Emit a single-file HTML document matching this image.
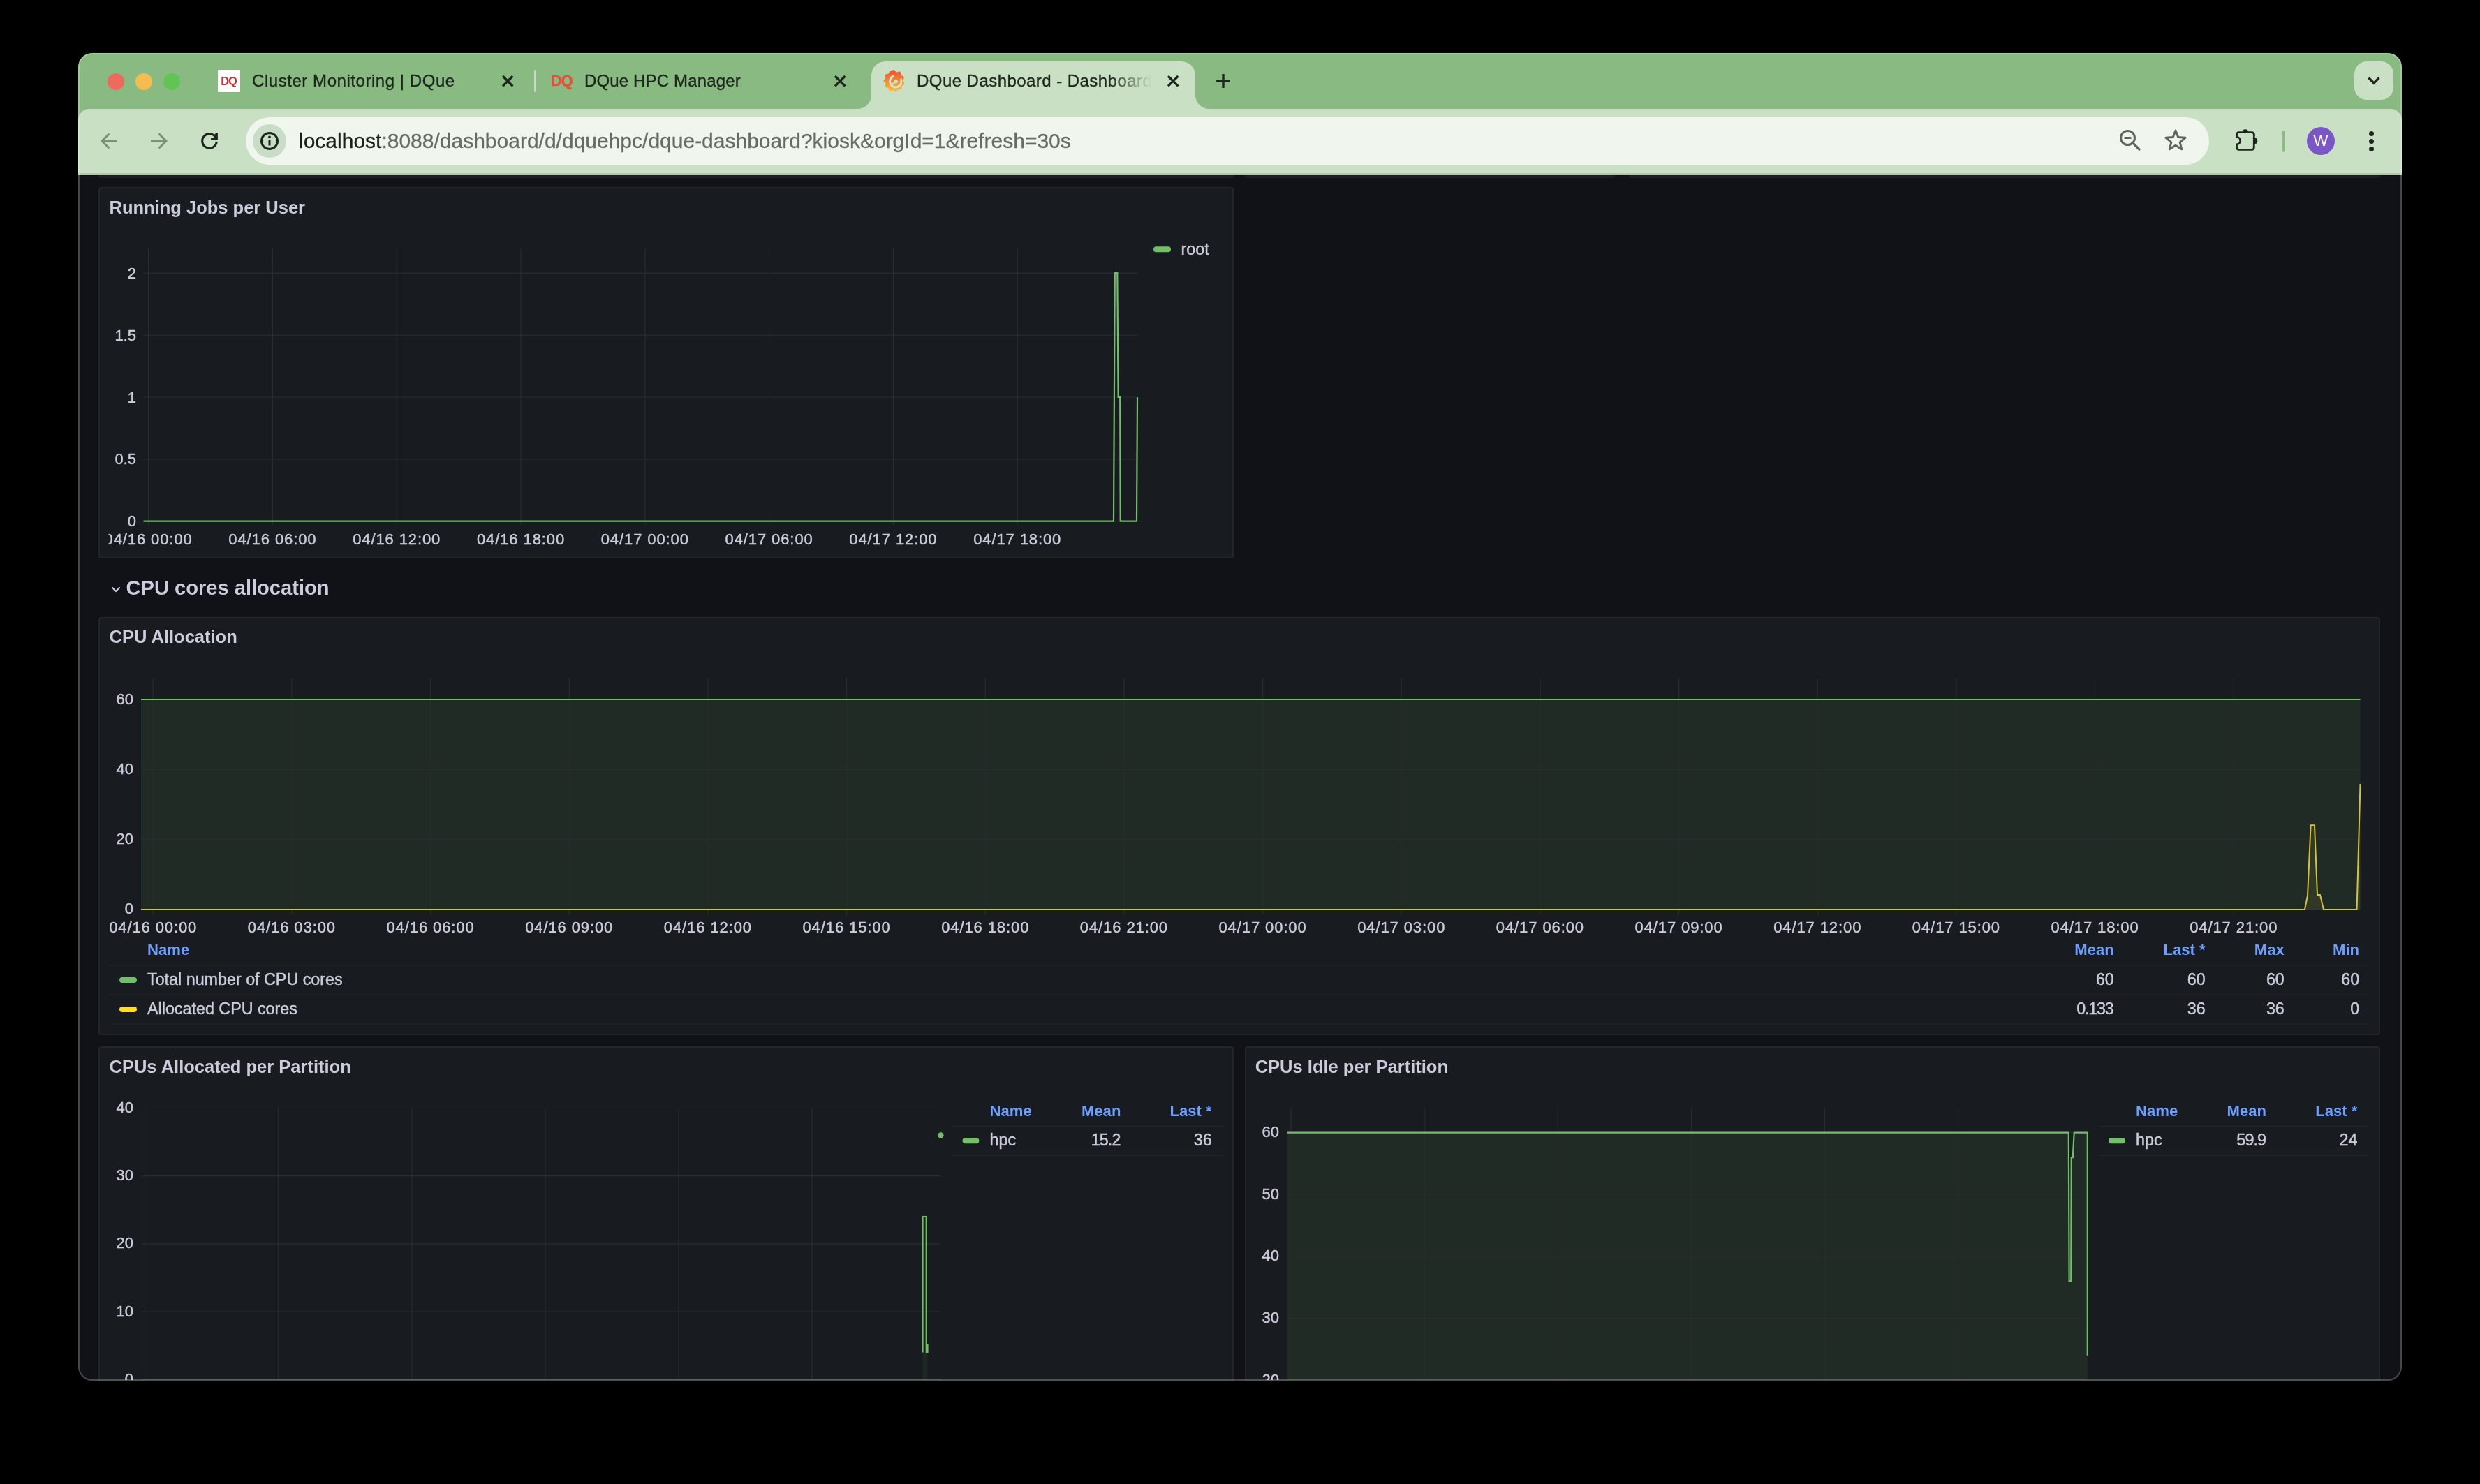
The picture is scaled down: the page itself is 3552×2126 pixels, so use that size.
<!DOCTYPE html>
<html><head><meta charset="utf-8"><title>DQue Dashboard</title>
<style>
html,body{margin:0;padding:0;background:#000;}
body{width:3552px;height:2126px;overflow:hidden;position:relative;font-family:"Liberation Sans", sans-serif;}
#win{position:absolute;left:0;top:0;width:3552px;height:2126px;clip-path:inset(76px 112px 148px 112px round 20px);}
#win > div{will-change:transform;}
svg text{font-family:"Liberation Sans", sans-serif;}
</style></head><body>
<div id="win">
<div style="position:absolute;left:112px;top:76px;width:3328px;height:110px;background:#88ba82"></div>
<div style="position:absolute;left:154px;top:105px;width:24px;height:24px;border-radius:50%;background:#ee6a5f"></div>
<div style="position:absolute;left:194px;top:105px;width:24px;height:24px;border-radius:50%;background:#f5bd4f"></div>
<div style="position:absolute;left:234px;top:105px;width:24px;height:24px;border-radius:50%;background:#61c454"></div>
<div style="position:absolute;left:112px;top:156px;width:3328px;height:94px;background:#c9e0c5;border-radius:16px 16px 0 0"></div>
<div style="position:absolute;left:112px;top:248px;width:3328px;height:2px;background:#b4c6b0"></div>
<div style="position:absolute;left:1248px;top:88px;width:464px;height:80px;background:#c9e0c5;border-radius:20px 20px 0 0"></div>
<div style="position:absolute;left:1228px;top:136px;width:20px;height:20px;background:radial-gradient(circle at 0 0, #88ba82 19.5px, #c9e0c5 20.5px)"></div>
<div style="position:absolute;left:1712px;top:136px;width:20px;height:20px;background:radial-gradient(circle at 100% 0, #88ba82 19.5px, #c9e0c5 20.5px)"></div>
<div style="position:absolute;left:312px;top:100px;width:32px;height:32px;background:#fff;color:#cc3030;font-weight:bold;font-size:16.5px;line-height:32px;text-align:center;letter-spacing:-1px;text-indent:-1px">DQ</div>
<div style="position:absolute;left:361px;top:100px;height:32px;line-height:32px;font-size:24px;color:#1d261c;white-space:nowrap;letter-spacing:0.55px;-webkit-text-stroke:0.35px #1d261c;">Cluster Monitoring | DQue</div>
<svg style="position:absolute;left:718.3px;top:106.8px" width="18.4" height="18.4"><path d="M2 2L16.4 16.4M16.4 2L2 16.4" stroke="#1d261c" stroke-width="3.3" stroke-linecap="butt"/></svg>
<div style="position:absolute;left:765px;top:100px;width:3px;height:32px;border-radius:2px;background:#c4ddc0"></div>
<div style="position:absolute;left:783px;top:100px;width:42px;height:32px;color:#e2523a;font-weight:bold;font-size:22px;line-height:32px;text-align:center;letter-spacing:-1.5px;-webkit-text-stroke:0.6px #e2523a">DQ</div>
<div style="position:absolute;left:837px;top:100px;height:32px;line-height:32px;font-size:24px;color:#1d261c;white-space:nowrap;letter-spacing:0.15px;-webkit-text-stroke:0.35px #1d261c;">DQue HPC Manager</div>
<svg style="position:absolute;left:1194.3px;top:106.8px" width="18.4" height="18.4"><path d="M2 2L16.4 16.4M16.4 2L2 16.4" stroke="#1d261c" stroke-width="3.3" stroke-linecap="butt"/></svg>
<svg style="position:absolute;left:1262px;top:98px" width="36" height="36" viewBox="0 0 36 36">
<defs><linearGradient id="gg" x1="0" y1="1" x2="0" y2="0"><stop offset="0" stop-color="#f9c33c"/><stop offset="1" stop-color="#ee4f2c"/></linearGradient></defs>
<path fill="url(#gg)" d="M18.5 2 L22 5.5 L27.5 4.5 L28.5 9 L33 12.5 L31.5 17 L33.5 22.5 L29.5 25 L29 30 L24 30.5 L21 34 L17 31.5 L12 33 L10.5 28.5 L5.5 26.5 L6.5 21.5 L3 17.5 L6.5 14 L5.5 9 L10.5 7.5 L13 3.5 Z"/>
<circle cx="20.8" cy="18.6" r="8.3" fill="none" stroke="#d3e7d0" stroke-width="2.9" stroke-dasharray="40.5 11.6" transform="rotate(-25 20.8 18.6)"/>
<circle cx="21" cy="18.6" r="2.9" fill="#c9e0c5"/>
<path d="M21 18.6 L15.5 23.5" stroke="#c9e0c5" stroke-width="2.6"/>
</svg>
<div style="position:absolute;left:1313px;top:100px;height:32px;line-height:32px;font-size:24px;color:#1d261c;white-space:nowrap;letter-spacing:0.45px;-webkit-text-stroke:0.35px #1d261c;width:336px;overflow:hidden;-webkit-mask-image:linear-gradient(to right,#000 82%,transparent 100%);">DQue Dashboard - Dashboard</div>
<svg style="position:absolute;left:1670.8px;top:106.8px" width="18.4" height="18.4"><path d="M2 2L16.4 16.4M16.4 2L2 16.4" stroke="#1d261c" stroke-width="3.3" stroke-linecap="butt"/></svg>
<svg style="position:absolute;left:1740px;top:103.8px" width="24" height="24"><path d="M12 2.1V21.9M2.1 12H21.9" stroke="#1d261c" stroke-width="3.4"/></svg>
<div style="position:absolute;left:3372px;top:88px;width:56px;height:55px;border-radius:18px;background:#c9e0c5"></div>
<svg style="position:absolute;left:3389.5px;top:109px" width="20" height="14"><path d="M2.5 2.5L10 10L17.5 2.5" fill="none" stroke="#1d261c" stroke-width="3.4" stroke-linejoin="miter"/></svg>
<svg style="position:absolute;left:140px;top:186px" width="32" height="32"><path d="M28 16H6M16.5 5.5L6 16L16.5 26.5" fill="none" stroke="#789474" stroke-width="3"/></svg>
<svg style="position:absolute;left:212px;top:186px" width="32" height="32"><path d="M4 16H26M15.5 5.5L26 16L15.5 26.5" fill="none" stroke="#789474" stroke-width="3"/></svg>
<svg style="position:absolute;left:284px;top:186px" width="32" height="32"><path d="M26.26 16.9A10.3 10.3 0 1 1 24.8 10.6" fill="none" stroke="#1d261c" stroke-width="3.1"/><path d="M18.1 11.2V13.9H27.9V4.1H25.2V11.2Z" fill="#1d261c"/><path d="M21.5 8.2L25.2 4.8V11.2H23Z" fill="#1d261c"/></svg>
<div style="position:absolute;left:352px;top:168px;width:2812px;height:68px;border-radius:34px;background:#f0f6ee"></div>
<div style="position:absolute;left:362px;top:178px;width:48px;height:48px;border-radius:50%;background:#c9dcc5"></div>
<svg style="position:absolute;left:370px;top:186px" width="32" height="32"><circle cx="16" cy="16" r="11.5" fill="none" stroke="#1d261c" stroke-width="3"/><rect x="14.5" y="14" width="3" height="8.5" fill="#1d261c"/><circle cx="16" cy="10.3" r="1.9" fill="#1d261c"/></svg>
<div style="position:absolute;left:428px;top:180px;height:44px;line-height:44px;font-size:30px;color:#1a1f1a;white-space:nowrap;-webkit-text-stroke:0.3px #1a1f1a">localhost<span style="color:#646c63;-webkit-text-stroke:0.3px #646c63">:8088/dashboard/d/dquehpc/dque-dashboard?kiosk&amp;orgId=1&amp;refresh=30s</span></div>
<svg style="position:absolute;left:3033px;top:183px" width="36" height="36"><circle cx="14.5" cy="14.5" r="10" fill="none" stroke="#5d665b" stroke-width="3"/><path d="M9.5 14.5H19.5" stroke="#5d665b" stroke-width="3"/><path d="M22 22L31 31" stroke="#5d665b" stroke-width="3.2" stroke-linecap="round"/></svg>
<svg style="position:absolute;left:3098px;top:183px" width="36" height="36"><path d="M18 4L21.8 13.6L32 14.3L24.2 20.8L26.7 30.8L18 25.3L9.3 30.8L11.8 20.8L4 14.3L14.2 13.6Z" fill="none" stroke="#5d665b" stroke-width="3" stroke-linejoin="round"/></svg>
<svg style="position:absolute;left:3195px;top:180px" width="44" height="42"><path d="M11.5 9.6H30.3A3 3 0 0 1 33.3 12.6V31.4A3 3 0 0 1 30.3 34.4H11.5A3 3 0 0 1 8.5 31.4V26.8A5.2 5.2 0 0 0 8.5 16.4V12.6A3 3 0 0 1 11.5 9.6Z" fill="none" stroke="#1d261c" stroke-width="2.8"/><path d="M16.8 9.4A4.1 4.1 0 0 1 25 9.4Z" fill="#1d261c"/><path d="M33.3 16.8A5 5 0 0 1 33.3 26.8Z" fill="#1d261c"/></svg>
<div style="position:absolute;left:3269px;top:187px;width:3px;height:31px;border-radius:2px;background:#8bbb85"></div>
<div style="position:absolute;left:3304px;top:182px;width:40px;height:40px;border-radius:50%;background:#7a57c4;color:#fff;font-size:22px;line-height:40px;text-align:center">W</div>
<div style="position:absolute;left:3392.5px;top:187.5px;width:7px;height:7px;border-radius:50%;background:#1d261c"></div>
<div style="position:absolute;left:3392.5px;top:198.5px;width:7px;height:7px;border-radius:50%;background:#1d261c"></div>
<div style="position:absolute;left:3392.5px;top:209.5px;width:7px;height:7px;border-radius:50%;background:#1d261c"></div>
<div style="position:absolute;left:112px;top:250px;width:3328px;height:1728px;background:#111217"></div>
<div style="position:absolute;left:141px;top:250px;width:1626px;height:5px;background:#1b1e23;border-radius:0 0 4px 4px"></div>
<div style="position:absolute;left:1783px;top:250px;width:530px;height:5px;background:#1b1e23;border-radius:0 0 4px 4px"></div>
<div style="position:absolute;left:2333px;top:250px;width:1076px;height:5px;background:#1b1e23;border-radius:0 0 4px 4px"></div>
<div style="position:absolute;left:141px;top:268px;width:1626px;height:532px;background:#181b1f;border:2px solid #222529;box-sizing:border-box;border-radius:4px"></div>
<div style="position:absolute;left:141px;top:884px;width:3268px;height:599px;background:#181b1f;border:2px solid #222529;box-sizing:border-box;border-radius:4px"></div>
<div style="position:absolute;left:141px;top:1499px;width:1626px;height:601px;background:#181b1f;border:2px solid #222529;box-sizing:border-box;border-radius:4px"></div>
<div style="position:absolute;left:1783px;top:1499px;width:1626px;height:601px;background:#181b1f;border:2px solid #222529;box-sizing:border-box;border-radius:4px"></div>
<svg style="position:absolute;left:158px;top:837.6px" width="16" height="14"><path d="M3 4L8 9L13 4" fill="none" stroke="#ccccdc" stroke-width="2.2" stroke-linecap="round"/></svg>
<svg style="position:absolute;left:0;top:0;will-change:transform" width="3552" height="2126">
<clipPath id="pc"><rect x="113" y="250" width="3326" height="1727"/></clipPath>
<g clip-path="url(#pc)">
<text x="156.5" y="297" font-size="25.5" fill="#ccccdc" text-anchor="start" font-weight="bold" dominant-baseline="central" letter-spacing="0" stroke="#ccccdc" stroke-width="0" >Running Jobs per User</text>
<line x1="205.5" y1="391.2" x2="1629" y2="391.2" stroke="#292c30" stroke-width="1.2"/>
<text x="195" y="391.2" font-size="22" fill="#ccccdc" text-anchor="end" font-weight="normal" dominant-baseline="central" letter-spacing="0" stroke="#ccccdc" stroke-width="0.45" >2</text>
<line x1="205.5" y1="480.1" x2="1629" y2="480.1" stroke="#292c30" stroke-width="1.2"/>
<text x="195" y="480.1" font-size="22" fill="#ccccdc" text-anchor="end" font-weight="normal" dominant-baseline="central" letter-spacing="0" stroke="#ccccdc" stroke-width="0.45" >1.5</text>
<line x1="205.5" y1="569" x2="1629" y2="569" stroke="#292c30" stroke-width="1.2"/>
<text x="195" y="569" font-size="22" fill="#ccccdc" text-anchor="end" font-weight="normal" dominant-baseline="central" letter-spacing="0" stroke="#ccccdc" stroke-width="0.45" >1</text>
<line x1="205.5" y1="657.9" x2="1629" y2="657.9" stroke="#292c30" stroke-width="1.2"/>
<text x="195" y="657.9" font-size="22" fill="#ccccdc" text-anchor="end" font-weight="normal" dominant-baseline="central" letter-spacing="0" stroke="#ccccdc" stroke-width="0.45" >0.5</text>
<line x1="205.5" y1="746.7" x2="1629" y2="746.7" stroke="#292c30" stroke-width="1.2"/>
<text x="195" y="746.7" font-size="22" fill="#ccccdc" text-anchor="end" font-weight="normal" dominant-baseline="central" letter-spacing="0" stroke="#ccccdc" stroke-width="0.45" >0</text>
<line x1="212.6" y1="356" x2="212.6" y2="752" stroke="#292c30" stroke-width="1.2"/>
<line x1="390.4" y1="356" x2="390.4" y2="752" stroke="#292c30" stroke-width="1.2"/>
<line x1="568.2" y1="356" x2="568.2" y2="752" stroke="#292c30" stroke-width="1.2"/>
<line x1="746.0000000000001" y1="356" x2="746.0000000000001" y2="752" stroke="#292c30" stroke-width="1.2"/>
<line x1="923.8000000000001" y1="356" x2="923.8000000000001" y2="752" stroke="#292c30" stroke-width="1.2"/>
<line x1="1101.6" y1="356" x2="1101.6" y2="752" stroke="#292c30" stroke-width="1.2"/>
<line x1="1279.4" y1="356" x2="1279.4" y2="752" stroke="#292c30" stroke-width="1.2"/>
<line x1="1457.2" y1="356" x2="1457.2" y2="752" stroke="#292c30" stroke-width="1.2"/>
<clipPath id="c1"><rect x="155.5" y="700" width="1600" height="100"/></clipPath>
<text x="212.6" y="772" font-size="22" fill="#ccccdc" text-anchor="middle" font-weight="normal" dominant-baseline="central" letter-spacing="0.9" stroke="#ccccdc" stroke-width="0.45" clip-path="url(#c1)">04/16 00:00</text>
<text x="390.4" y="772" font-size="22" fill="#ccccdc" text-anchor="middle" font-weight="normal" dominant-baseline="central" letter-spacing="0.9" stroke="#ccccdc" stroke-width="0.45" clip-path="url(#c1)">04/16 06:00</text>
<text x="568.2" y="772" font-size="22" fill="#ccccdc" text-anchor="middle" font-weight="normal" dominant-baseline="central" letter-spacing="0.9" stroke="#ccccdc" stroke-width="0.45" clip-path="url(#c1)">04/16 12:00</text>
<text x="746.0000000000001" y="772" font-size="22" fill="#ccccdc" text-anchor="middle" font-weight="normal" dominant-baseline="central" letter-spacing="0.9" stroke="#ccccdc" stroke-width="0.45" clip-path="url(#c1)">04/16 18:00</text>
<text x="923.8000000000001" y="772" font-size="22" fill="#ccccdc" text-anchor="middle" font-weight="normal" dominant-baseline="central" letter-spacing="0.9" stroke="#ccccdc" stroke-width="0.45" clip-path="url(#c1)">04/17 00:00</text>
<text x="1101.6" y="772" font-size="22" fill="#ccccdc" text-anchor="middle" font-weight="normal" dominant-baseline="central" letter-spacing="0.9" stroke="#ccccdc" stroke-width="0.45" clip-path="url(#c1)">04/17 06:00</text>
<text x="1279.4" y="772" font-size="22" fill="#ccccdc" text-anchor="middle" font-weight="normal" dominant-baseline="central" letter-spacing="0.9" stroke="#ccccdc" stroke-width="0.45" clip-path="url(#c1)">04/17 12:00</text>
<text x="1457.2" y="772" font-size="22" fill="#ccccdc" text-anchor="middle" font-weight="normal" dominant-baseline="central" letter-spacing="0.9" stroke="#ccccdc" stroke-width="0.45" clip-path="url(#c1)">04/17 18:00</text>
<path d="M205.5 746.7 L1595 746.7 L1596.8 391.2 L1600.3 391.2 L1601.6 569 L1604.2 569 L1604.7 746.7 L1628 746.7 L1629 569" fill="none" stroke="#73bf69" stroke-width="2.2"/>
<line x1="1656" y1="357.3" x2="1673" y2="357.3" stroke="#73bf69" stroke-width="8" stroke-linecap="round"/>
<text x="1691.5" y="357" font-size="23.3" fill="#ccccdc" text-anchor="start" font-weight="normal" dominant-baseline="central" letter-spacing="0" stroke="#ccccdc" stroke-width="0.45" >root</text>
<text x="180.5" y="842" font-size="29.1" fill="#ccccdc" text-anchor="start" font-weight="bold" dominant-baseline="central" letter-spacing="0" stroke="#ccccdc" stroke-width="0" >CPU cores allocation</text>
<text x="156.5" y="912" font-size="25.5" fill="#ccccdc" text-anchor="start" font-weight="bold" dominant-baseline="central" letter-spacing="0" stroke="#ccccdc" stroke-width="0" >CPU Allocation</text>
<rect x="202" y="1002.0000000000001" width="3178.5" height="300.9" fill="#73bf69" fill-opacity="0.1"/>
<line x1="202" y1="1002.0000000000001" x2="3380.5" y2="1002.0000000000001" stroke="#292c30" stroke-width="1.2"/>
<text x="191" y="1001.0000000000001" font-size="22" fill="#ccccdc" text-anchor="end" font-weight="normal" dominant-baseline="central" letter-spacing="0" stroke="#ccccdc" stroke-width="0.45" >60</text>
<line x1="202" y1="1102.3000000000002" x2="3380.5" y2="1102.3000000000002" stroke="#292c30" stroke-width="1.2"/>
<text x="191" y="1101.3000000000002" font-size="22" fill="#ccccdc" text-anchor="end" font-weight="normal" dominant-baseline="central" letter-spacing="0" stroke="#ccccdc" stroke-width="0.45" >40</text>
<line x1="202" y1="1202.6000000000001" x2="3380.5" y2="1202.6000000000001" stroke="#292c30" stroke-width="1.2"/>
<text x="191" y="1201.6000000000001" font-size="22" fill="#ccccdc" text-anchor="end" font-weight="normal" dominant-baseline="central" letter-spacing="0" stroke="#ccccdc" stroke-width="0.45" >20</text>
<line x1="202" y1="1302.9" x2="3380.5" y2="1302.9" stroke="#292c30" stroke-width="1.2"/>
<text x="191" y="1301.9" font-size="22" fill="#ccccdc" text-anchor="end" font-weight="normal" dominant-baseline="central" letter-spacing="0" stroke="#ccccdc" stroke-width="0.45" >0</text>
<line x1="219.2" y1="972" x2="219.2" y2="1310" stroke="#292c30" stroke-width="1.2"/>
<text x="219.2" y="1328.5" font-size="22" fill="#ccccdc" text-anchor="middle" font-weight="normal" dominant-baseline="central" letter-spacing="0.9" stroke="#ccccdc" stroke-width="0.45" >04/16 00:00</text>
<line x1="417.87" y1="972" x2="417.87" y2="1310" stroke="#292c30" stroke-width="1.2"/>
<text x="417.87" y="1328.5" font-size="22" fill="#ccccdc" text-anchor="middle" font-weight="normal" dominant-baseline="central" letter-spacing="0.9" stroke="#ccccdc" stroke-width="0.45" >04/16 03:00</text>
<line x1="616.54" y1="972" x2="616.54" y2="1310" stroke="#292c30" stroke-width="1.2"/>
<text x="616.54" y="1328.5" font-size="22" fill="#ccccdc" text-anchor="middle" font-weight="normal" dominant-baseline="central" letter-spacing="0.9" stroke="#ccccdc" stroke-width="0.45" >04/16 06:00</text>
<line x1="815.21" y1="972" x2="815.21" y2="1310" stroke="#292c30" stroke-width="1.2"/>
<text x="815.21" y="1328.5" font-size="22" fill="#ccccdc" text-anchor="middle" font-weight="normal" dominant-baseline="central" letter-spacing="0.9" stroke="#ccccdc" stroke-width="0.45" >04/16 09:00</text>
<line x1="1013.8799999999999" y1="972" x2="1013.8799999999999" y2="1310" stroke="#292c30" stroke-width="1.2"/>
<text x="1013.8799999999999" y="1328.5" font-size="22" fill="#ccccdc" text-anchor="middle" font-weight="normal" dominant-baseline="central" letter-spacing="0.9" stroke="#ccccdc" stroke-width="0.45" >04/16 12:00</text>
<line x1="1212.55" y1="972" x2="1212.55" y2="1310" stroke="#292c30" stroke-width="1.2"/>
<text x="1212.55" y="1328.5" font-size="22" fill="#ccccdc" text-anchor="middle" font-weight="normal" dominant-baseline="central" letter-spacing="0.9" stroke="#ccccdc" stroke-width="0.45" >04/16 15:00</text>
<line x1="1411.22" y1="972" x2="1411.22" y2="1310" stroke="#292c30" stroke-width="1.2"/>
<text x="1411.22" y="1328.5" font-size="22" fill="#ccccdc" text-anchor="middle" font-weight="normal" dominant-baseline="central" letter-spacing="0.9" stroke="#ccccdc" stroke-width="0.45" >04/16 18:00</text>
<line x1="1609.8899999999999" y1="972" x2="1609.8899999999999" y2="1310" stroke="#292c30" stroke-width="1.2"/>
<text x="1609.8899999999999" y="1328.5" font-size="22" fill="#ccccdc" text-anchor="middle" font-weight="normal" dominant-baseline="central" letter-spacing="0.9" stroke="#ccccdc" stroke-width="0.45" >04/16 21:00</text>
<line x1="1808.56" y1="972" x2="1808.56" y2="1310" stroke="#292c30" stroke-width="1.2"/>
<text x="1808.56" y="1328.5" font-size="22" fill="#ccccdc" text-anchor="middle" font-weight="normal" dominant-baseline="central" letter-spacing="0.9" stroke="#ccccdc" stroke-width="0.45" >04/17 00:00</text>
<line x1="2007.23" y1="972" x2="2007.23" y2="1310" stroke="#292c30" stroke-width="1.2"/>
<text x="2007.23" y="1328.5" font-size="22" fill="#ccccdc" text-anchor="middle" font-weight="normal" dominant-baseline="central" letter-spacing="0.9" stroke="#ccccdc" stroke-width="0.45" >04/17 03:00</text>
<line x1="2205.8999999999996" y1="972" x2="2205.8999999999996" y2="1310" stroke="#292c30" stroke-width="1.2"/>
<text x="2205.8999999999996" y="1328.5" font-size="22" fill="#ccccdc" text-anchor="middle" font-weight="normal" dominant-baseline="central" letter-spacing="0.9" stroke="#ccccdc" stroke-width="0.45" >04/17 06:00</text>
<line x1="2404.5699999999997" y1="972" x2="2404.5699999999997" y2="1310" stroke="#292c30" stroke-width="1.2"/>
<text x="2404.5699999999997" y="1328.5" font-size="22" fill="#ccccdc" text-anchor="middle" font-weight="normal" dominant-baseline="central" letter-spacing="0.9" stroke="#ccccdc" stroke-width="0.45" >04/17 09:00</text>
<line x1="2603.24" y1="972" x2="2603.24" y2="1310" stroke="#292c30" stroke-width="1.2"/>
<text x="2603.24" y="1328.5" font-size="22" fill="#ccccdc" text-anchor="middle" font-weight="normal" dominant-baseline="central" letter-spacing="0.9" stroke="#ccccdc" stroke-width="0.45" >04/17 12:00</text>
<line x1="2801.91" y1="972" x2="2801.91" y2="1310" stroke="#292c30" stroke-width="1.2"/>
<text x="2801.91" y="1328.5" font-size="22" fill="#ccccdc" text-anchor="middle" font-weight="normal" dominant-baseline="central" letter-spacing="0.9" stroke="#ccccdc" stroke-width="0.45" >04/17 15:00</text>
<line x1="3000.5799999999995" y1="972" x2="3000.5799999999995" y2="1310" stroke="#292c30" stroke-width="1.2"/>
<text x="3000.5799999999995" y="1328.5" font-size="22" fill="#ccccdc" text-anchor="middle" font-weight="normal" dominant-baseline="central" letter-spacing="0.9" stroke="#ccccdc" stroke-width="0.45" >04/17 18:00</text>
<line x1="3199.2499999999995" y1="972" x2="3199.2499999999995" y2="1310" stroke="#292c30" stroke-width="1.2"/>
<text x="3199.2499999999995" y="1328.5" font-size="22" fill="#ccccdc" text-anchor="middle" font-weight="normal" dominant-baseline="central" letter-spacing="0.9" stroke="#ccccdc" stroke-width="0.45" >04/17 21:00</text>
<line x1="202" y1="1002.0000000000001" x2="3380.5" y2="1002.0000000000001" stroke="#73bf69" stroke-width="2.2"/>
<path d="M202 1302.9 L3301 1302.9 L3305 1283.3 L3309.6 1182.2 L3315 1182.2 L3319 1282 L3323 1282 L3328 1302.9 L3375.6 1302.9 L3380.5 1123 L3380.5 1302.9 Z" fill="#fade2a" fill-opacity="0.08"/>
<path d="M202 1302.9 L3301 1302.9 L3305 1283.3 L3309.6 1182.2 L3315 1182.2 L3319 1282 L3323 1282 L3328 1302.9 L3375.6 1302.9 L3380.5 1123" fill="none" stroke="#d2c43c" stroke-width="2"/>
<text x="211" y="1360" font-size="22.1" fill="#6e9fff" text-anchor="start" font-weight="bold" dominant-baseline="central" letter-spacing="0" stroke="#6e9fff" stroke-width="0" >Name</text>
<text x="3027.8" y="1360" font-size="22.1" fill="#6e9fff" text-anchor="end" font-weight="bold" dominant-baseline="central" letter-spacing="0" stroke="#6e9fff" stroke-width="0" >Mean</text>
<text x="3158.6" y="1360" font-size="22.1" fill="#6e9fff" text-anchor="end" font-weight="bold" dominant-baseline="central" letter-spacing="0" stroke="#6e9fff" stroke-width="0" >Last *</text>
<text x="3271.8" y="1360" font-size="22.1" fill="#6e9fff" text-anchor="end" font-weight="bold" dominant-baseline="central" letter-spacing="0" stroke="#6e9fff" stroke-width="0" >Max</text>
<text x="3379.1" y="1360" font-size="22.1" fill="#6e9fff" text-anchor="end" font-weight="bold" dominant-baseline="central" letter-spacing="0" stroke="#6e9fff" stroke-width="0" >Min</text>
<line x1="156.5" y1="1383" x2="3393" y2="1383" stroke="#23252a" stroke-width="1.5"/>
<line x1="156.5" y1="1425" x2="3393" y2="1425" stroke="#23252a" stroke-width="1.5"/>
<line x1="156.5" y1="1467" x2="3393" y2="1467" stroke="#23252a" stroke-width="1.5"/>
<line x1="175" y1="1404.0" x2="192" y2="1404.0" stroke="#73bf69" stroke-width="8" stroke-linecap="round"/>
<text x="211" y="1402.5" font-size="23.3" fill="#ccccdc" text-anchor="start" font-weight="normal" dominant-baseline="central" letter-spacing="0" stroke="#ccccdc" stroke-width="0.45" >Total number of CPU cores</text>
<text x="3027.8" y="1402.5" font-size="23.3" fill="#ccccdc" text-anchor="end" font-weight="normal" dominant-baseline="central" letter-spacing="0" stroke="#ccccdc" stroke-width="0.45" >60</text>
<text x="3158.6" y="1402.5" font-size="23.3" fill="#ccccdc" text-anchor="end" font-weight="normal" dominant-baseline="central" letter-spacing="0" stroke="#ccccdc" stroke-width="0.45" >60</text>
<text x="3271.8" y="1402.5" font-size="23.3" fill="#ccccdc" text-anchor="end" font-weight="normal" dominant-baseline="central" letter-spacing="0" stroke="#ccccdc" stroke-width="0.45" >60</text>
<text x="3379.1" y="1402.5" font-size="23.3" fill="#ccccdc" text-anchor="end" font-weight="normal" dominant-baseline="central" letter-spacing="0" stroke="#ccccdc" stroke-width="0.45" >60</text>
<line x1="175" y1="1446.0" x2="192" y2="1446.0" stroke="#fade2a" stroke-width="8" stroke-linecap="round"/>
<text x="211" y="1444.5" font-size="23.3" fill="#ccccdc" text-anchor="start" font-weight="normal" dominant-baseline="central" letter-spacing="0" stroke="#ccccdc" stroke-width="0.45" >Allocated CPU cores</text>
<text x="3026.6000000000004" y="1444.5" font-size="23.3" fill="#ccccdc" text-anchor="end" font-weight="normal" dominant-baseline="central" letter-spacing="-1.2" stroke="#ccccdc" stroke-width="0.45" >0.133</text>
<text x="3158.6" y="1444.5" font-size="23.3" fill="#ccccdc" text-anchor="end" font-weight="normal" dominant-baseline="central" letter-spacing="0" stroke="#ccccdc" stroke-width="0.45" >36</text>
<text x="3271.8" y="1444.5" font-size="23.3" fill="#ccccdc" text-anchor="end" font-weight="normal" dominant-baseline="central" letter-spacing="0" stroke="#ccccdc" stroke-width="0.45" >36</text>
<text x="3379.1" y="1444.5" font-size="23.3" fill="#ccccdc" text-anchor="end" font-weight="normal" dominant-baseline="central" letter-spacing="0" stroke="#ccccdc" stroke-width="0.45" >0</text>
<text x="156.5" y="1528" font-size="25.5" fill="#ccccdc" text-anchor="start" font-weight="bold" dominant-baseline="central" letter-spacing="0" stroke="#ccccdc" stroke-width="0" >CPUs Allocated per Partition</text>
<line x1="207.6" y1="1587.5" x2="207.6" y2="1990" stroke="#292c30" stroke-width="1.2"/>
<line x1="398.7" y1="1587.5" x2="398.7" y2="1990" stroke="#292c30" stroke-width="1.2"/>
<line x1="589.8" y1="1587.5" x2="589.8" y2="1990" stroke="#292c30" stroke-width="1.2"/>
<line x1="780.9" y1="1587.5" x2="780.9" y2="1990" stroke="#292c30" stroke-width="1.2"/>
<line x1="972.0" y1="1587.5" x2="972.0" y2="1990" stroke="#292c30" stroke-width="1.2"/>
<line x1="1163.1" y1="1587.5" x2="1163.1" y2="1990" stroke="#292c30" stroke-width="1.2"/>
<line x1="203" y1="1587.5" x2="1348" y2="1587.5" stroke="#292c30" stroke-width="1.2"/>
<text x="191" y="1586.5" font-size="22" fill="#ccccdc" text-anchor="end" font-weight="normal" dominant-baseline="central" letter-spacing="0" stroke="#ccccdc" stroke-width="0.45" >40</text>
<line x1="203" y1="1684.6999999999998" x2="1348" y2="1684.6999999999998" stroke="#292c30" stroke-width="1.2"/>
<text x="191" y="1683.6999999999998" font-size="22" fill="#ccccdc" text-anchor="end" font-weight="normal" dominant-baseline="central" letter-spacing="0" stroke="#ccccdc" stroke-width="0.45" >30</text>
<line x1="203" y1="1781.8999999999999" x2="1348" y2="1781.8999999999999" stroke="#292c30" stroke-width="1.2"/>
<text x="191" y="1780.8999999999999" font-size="22" fill="#ccccdc" text-anchor="end" font-weight="normal" dominant-baseline="central" letter-spacing="0" stroke="#ccccdc" stroke-width="0.45" >20</text>
<line x1="203" y1="1879.1" x2="1348" y2="1879.1" stroke="#292c30" stroke-width="1.2"/>
<text x="191" y="1878.1" font-size="22" fill="#ccccdc" text-anchor="end" font-weight="normal" dominant-baseline="central" letter-spacing="0" stroke="#ccccdc" stroke-width="0.45" >10</text>
<line x1="203" y1="1976.3" x2="1348" y2="1976.3" stroke="#292c30" stroke-width="1.2"/>
<text x="191" y="1975.3" font-size="22" fill="#ccccdc" text-anchor="end" font-weight="normal" dominant-baseline="central" letter-spacing="0" stroke="#ccccdc" stroke-width="0.45" >0</text>
<path d="M1321.5 1990 L1321.5 1743.02 L1326.8 1743.02 L1326.8 1937.4199999999998 L1328.5 1937.4199999999998 L1328.5 1990 Z" fill="#73bf69" fill-opacity="0.08"/>
<path d="M1321.5 1937.4199999999998 L1321.5 1743.02 L1326.8 1743.02 L1326.8 1937.4199999999998 L1328.5 1937.4199999999998 L1328.5 1925" fill="none" stroke="#73bf69" stroke-width="2.2"/>
<circle cx="1347.4" cy="1626.3799999999999" r="4.2" fill="#73bf69"/>
<text x="1417.5" y="1591" font-size="22.1" fill="#6e9fff" text-anchor="start" font-weight="bold" dominant-baseline="central" letter-spacing="0" stroke="#6e9fff" stroke-width="0" >Name</text>
<text x="1605.4" y="1591" font-size="22.1" fill="#6e9fff" text-anchor="end" font-weight="bold" dominant-baseline="central" letter-spacing="0" stroke="#6e9fff" stroke-width="0" >Mean</text>
<text x="1735.6" y="1591" font-size="22.1" fill="#6e9fff" text-anchor="end" font-weight="bold" dominant-baseline="central" letter-spacing="0" stroke="#6e9fff" stroke-width="0" >Last *</text>
<line x1="1363.4" y1="1613.7" x2="1752" y2="1613.7" stroke="#23252a" stroke-width="1.2"/>
<line x1="1363.4" y1="1655.5" x2="1752" y2="1655.5" stroke="#23252a" stroke-width="1.2"/>
<line x1="1382.5" y1="1634.2" x2="1398.4" y2="1634.2" stroke="#73bf69" stroke-width="8" stroke-linecap="round"/>
<text x="1417.5" y="1633" font-size="23.3" fill="#ccccdc" text-anchor="start" font-weight="normal" dominant-baseline="central" letter-spacing="0" stroke="#ccccdc" stroke-width="0.45" >hpc</text>
<text x="1604.5" y="1633" font-size="23.3" fill="#ccccdc" text-anchor="end" font-weight="normal" dominant-baseline="central" letter-spacing="-0.9" stroke="#ccccdc" stroke-width="0.45" >15.2</text>
<text x="1735.6" y="1633" font-size="23.3" fill="#ccccdc" text-anchor="end" font-weight="normal" dominant-baseline="central" letter-spacing="0" stroke="#ccccdc" stroke-width="0.45" >36</text>
<text x="1797.7" y="1528" font-size="25.5" fill="#ccccdc" text-anchor="start" font-weight="bold" dominant-baseline="central" letter-spacing="0" stroke="#ccccdc" stroke-width="0" >CPUs Idle per Partition</text>
<path d="M1843.6 1622.62 L2962.8 1622.62 L2963.6 1835.308 L2966.2 1835.308 L2966.7 1658.068 L2968.8 1658.068 L2970.7 1622.62 L2989.8 1622.62 L2989.8 1941.6519999999998 L2989.8 1990 L1843.6 1990 Z" fill="#73bf69" fill-opacity="0.1"/>
<line x1="1849.1" y1="1587.5" x2="1849.1" y2="1990" stroke="#292c30" stroke-width="1.2"/>
<line x1="2040.1999999999998" y1="1587.5" x2="2040.1999999999998" y2="1990" stroke="#292c30" stroke-width="1.2"/>
<line x1="2231.2999999999997" y1="1587.5" x2="2231.2999999999997" y2="1990" stroke="#292c30" stroke-width="1.2"/>
<line x1="2422.3999999999996" y1="1587.5" x2="2422.3999999999996" y2="1990" stroke="#292c30" stroke-width="1.2"/>
<line x1="2613.5" y1="1587.5" x2="2613.5" y2="1990" stroke="#292c30" stroke-width="1.2"/>
<line x1="2804.6" y1="1587.5" x2="2804.6" y2="1990" stroke="#292c30" stroke-width="1.2"/>
<line x1="1843.6" y1="1622.62" x2="2989.8" y2="1622.62" stroke="#292c30" stroke-width="1.2"/>
<text x="1832" y="1621.62" font-size="22" fill="#ccccdc" text-anchor="end" font-weight="normal" dominant-baseline="central" letter-spacing="0" stroke="#ccccdc" stroke-width="0.45" >60</text>
<line x1="1843.6" y1="1711.2399999999998" x2="2989.8" y2="1711.2399999999998" stroke="#292c30" stroke-width="1.2"/>
<text x="1832" y="1710.2399999999998" font-size="22" fill="#ccccdc" text-anchor="end" font-weight="normal" dominant-baseline="central" letter-spacing="0" stroke="#ccccdc" stroke-width="0.45" >50</text>
<line x1="1843.6" y1="1799.86" x2="2989.8" y2="1799.86" stroke="#292c30" stroke-width="1.2"/>
<text x="1832" y="1798.86" font-size="22" fill="#ccccdc" text-anchor="end" font-weight="normal" dominant-baseline="central" letter-spacing="0" stroke="#ccccdc" stroke-width="0.45" >40</text>
<line x1="1843.6" y1="1888.48" x2="2989.8" y2="1888.48" stroke="#292c30" stroke-width="1.2"/>
<text x="1832" y="1887.48" font-size="22" fill="#ccccdc" text-anchor="end" font-weight="normal" dominant-baseline="central" letter-spacing="0" stroke="#ccccdc" stroke-width="0.45" >30</text>
<line x1="1843.6" y1="1977.1" x2="2989.8" y2="1977.1" stroke="#292c30" stroke-width="1.2"/>
<text x="1832" y="1976.1" font-size="22" fill="#ccccdc" text-anchor="end" font-weight="normal" dominant-baseline="central" letter-spacing="0" stroke="#ccccdc" stroke-width="0.45" >20</text>
<path d="M1843.6 1622.62 L2962.8 1622.62 L2963.6 1835.308 L2966.2 1835.308 L2966.7 1658.068 L2968.8 1658.068 L2970.7 1622.62 L2989.8 1622.62 L2989.8 1941.6519999999998" fill="none" stroke="#73bf69" stroke-width="2.2"/>
<text x="3059" y="1591" font-size="22.1" fill="#6e9fff" text-anchor="start" font-weight="bold" dominant-baseline="central" letter-spacing="0" stroke="#6e9fff" stroke-width="0" >Name</text>
<text x="3246" y="1591" font-size="22.1" fill="#6e9fff" text-anchor="end" font-weight="bold" dominant-baseline="central" letter-spacing="0" stroke="#6e9fff" stroke-width="0" >Mean</text>
<text x="3376.4" y="1591" font-size="22.1" fill="#6e9fff" text-anchor="end" font-weight="bold" dominant-baseline="central" letter-spacing="0" stroke="#6e9fff" stroke-width="0" >Last *</text>
<line x1="3004" y1="1613.7" x2="3391.5" y2="1613.7" stroke="#23252a" stroke-width="1.2"/>
<line x1="3004" y1="1655.5" x2="3391.5" y2="1655.5" stroke="#23252a" stroke-width="1.2"/>
<line x1="3024" y1="1634.2" x2="3040" y2="1634.2" stroke="#73bf69" stroke-width="8" stroke-linecap="round"/>
<text x="3059" y="1633" font-size="23.3" fill="#ccccdc" text-anchor="start" font-weight="normal" dominant-baseline="central" letter-spacing="0" stroke="#ccccdc" stroke-width="0.45" >hpc</text>
<text x="3245.1" y="1633" font-size="23.3" fill="#ccccdc" text-anchor="end" font-weight="normal" dominant-baseline="central" letter-spacing="-0.9" stroke="#ccccdc" stroke-width="0.45" >59.9</text>
<text x="3376.4" y="1633" font-size="23.3" fill="#ccccdc" text-anchor="end" font-weight="normal" dominant-baseline="central" letter-spacing="0" stroke="#ccccdc" stroke-width="0.45" >24</text>
</g></svg>
</div>
<div style="position:absolute;left:112px;top:76px;width:3328px;height:1902px;box-sizing:border-box;border:2px solid rgba(255,255,255,0.24);border-radius:20px;pointer-events:none"></div>
</body></html>
